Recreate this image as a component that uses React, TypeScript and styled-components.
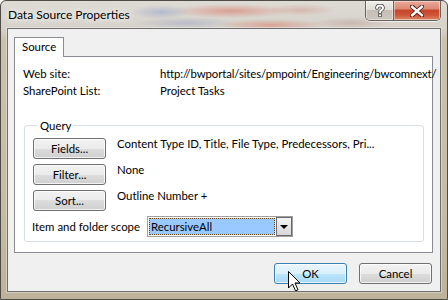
import React from 'react';
import styled, { createGlobalStyle } from 'styled-components';

const Global = createGlobalStyle`
  html, body { margin: 0; padding: 0; background: #ffffff; }
  body { font-family: Lato, "Noto Sans", sans-serif; font-size: 11.4px; color: #000; }
  * { box-sizing: border-box; }
`;

const Window = styled.div`
  position: relative;
  width: 448px;
  height: 300px;
  display: flex;
  flex-direction: column;
  border: 1px solid #4f4c47;
  border-radius: 6px 6px 0 0;
  overflow: hidden;
  background:
    radial-gradient(ellipse 30px 7px at 160px 11px, rgba(110, 130, 200, 0.35), transparent),
    radial-gradient(ellipse 60px 7px at 230px 10px, rgba(215, 90, 70, 0.45), transparent),
    radial-gradient(ellipse 35px 6px at 300px 9px, rgba(200, 110, 90, 0.3), transparent),
    radial-gradient(ellipse 50px 6px at 185px 22px, rgba(120, 135, 190, 0.3), transparent),
    radial-gradient(ellipse 55px 6px at 270px 24px, rgba(215, 95, 70, 0.4), transparent),
    radial-gradient(ellipse 40px 6px at 350px 22px, rgba(170, 120, 110, 0.3), transparent),
    linear-gradient(180deg, #dedbd5 0px, #d6d2ca 27px, #c9c1ab 40px, #c6bda6 200px, #bdb39b 300px);
`;

const TitleBar = styled.div`
  height: 27px;
  display: flex;
  justify-content: space-between;
  align-items: flex-start;
  flex: none;
`;

const Title = styled.div`
  margin: 6px 0 0 7px;
  font-size: 12px;
  line-height: 16px;
  color: #000;
  text-shadow: 0 0 6px #fff, 0 0 10px rgba(255, 255, 255, 0.9);
`;

const CaptionGroup = styled.div`
  display: flex;
  margin-right: 6px;
  border: 1px solid #6b6259;
  border-top: none;
  border-radius: 0 0 5px 5px;
  overflow: hidden;
  box-shadow: 0 1px 0 rgba(255, 255, 255, 0.6);
`;

const CaptionButton = styled.div<{ $close?: boolean }>`
  width: ${p => (p.$close ? 47 : 27)}px;
  height: 19px;
  display: flex;
  align-items: center;
  justify-content: center;
  border-left: ${p => (p.$close ? '1px solid #7a5a50' : 'none')};
  background: ${p =>
    p.$close
      ? 'linear-gradient(180deg, #e9a99a 0%, #dd8a75 40%, #c8452c 50%, #cf5638 75%, #dc8a6a 100%)'
      : 'linear-gradient(180deg, rgba(255,255,255,0.55) 0%, rgba(230,226,220,0.5) 45%, rgba(170,160,150,0.45) 50%, rgba(190,182,172,0.45) 100%)'};
  box-shadow: inset 0 0 0 1px rgba(255, 255, 255, 0.45);
`;

const Client = styled.div`
  flex: 1;
  margin: 0 6px 7px 6px;
  border: 1px solid #6e6e6e;
  background: #f0f0f0;
  display: flex;
  flex-direction: column;
  box-shadow: 0 0 0 1px rgba(255, 255, 255, 0.35);
`;

const TabArea = styled.div`
  padding: 8px 7px 0 6px;
  display: flex;
  flex-direction: column;
`;

const TabStrip = styled.div`
  display: flex;
`;

const Tab = styled.div`
  position: relative;
  z-index: 1;
  height: 20px;
  margin-bottom: -1px;
  padding: 1px 7px 0 7px;
  background: #ffffff;
  border: 1px solid #898c95;
  border-bottom: none;
  line-height: 16px;
`;

const Panel = styled.div`
  height: 197px;
  background: #ffffff;
  border: 1px solid #898c95;
  padding: 8px 8px 0 8px;
  display: flex;
  flex-direction: column;
`;

const InfoGrid = styled.div`
  display: grid;
  grid-template-columns: 137px 1fr;
  line-height: 17px;
  white-space: nowrap;
`;

const Url = styled.div`
  letter-spacing: -0.12px;
`;

const Fieldset = styled.fieldset`
  margin: 19px 0 0 1px;
  padding: 5px 8px 4px 8px;
  border: 1px solid #d5dfe5;
  border-radius: 3px;
  display: flex;
  flex-direction: column;
  gap: 5px;
  box-shadow: inset 0 0 0 1px #ffffff;
`;

const Legend = styled.legend`
  margin-left: 5px;
  padding: 0 2px;
  line-height: 15px;
`;

const QueryRow = styled.div`
  display: flex;
  align-items: flex-start;
  gap: 11px;
`;

const Description = styled.div`
  margin-top: -2px;
  line-height: 16px;
  white-space: nowrap;
`;

const PushButton = styled.div<{ $hot?: boolean }>`
  width: 73px;
  height: 21px;
  flex: none;
  display: flex;
  align-items: center;
  justify-content: center;
  border-radius: 3px;
  border: 1px solid ${p => (p.$hot ? '#3c7fb1' : '#707070')};
  background: ${p =>
    p.$hot
      ? 'linear-gradient(180deg, #eaf6fd 0%, #d9f0fc 50%, #bee6fd 50%, #a7d9f5 100%)'
      : 'linear-gradient(180deg, #f2f2f2 0%, #ebebeb 50%, #dddddd 50%, #cfcfcf 100%)'};
  box-shadow: inset 0 0 0 1px rgba(255, 255, 255, 0.75);
  line-height: 16px;
`;

const ScopeRow = styled.div`
  display: flex;
  align-items: center;
`;

const ScopeLabel = styled.div`
  width: 115px;
  margin-left: -1px;
  line-height: 16px;
  white-space: nowrap;
`;

const Combo = styled.div`
  width: 146px;
  height: 21px;
  display: flex;
  align-items: stretch;
  border: 1px solid #a0a0a0;
  background: #ffffff;
  padding: 1px;
  gap: 1px;
`;

const ComboValue = styled.div`
  flex: 1;
  background: #99c9ff;
  border: 1px dotted #6e4a24;
  line-height: 15px;
  padding-left: 1px;
  color: #000;
`;

const ComboArrow = styled.div`
  width: 16px;
  margin: -1px -1px -1px 0;
  border: 1px solid #6a6a6a;
  background: linear-gradient(180deg, #f4f4f4 0%, #e6e6e6 50%, #d6d6d6 100%);
  display: flex;
  align-items: center;
  justify-content: center;
`;

const Triangle = styled.div`
  width: 0;
  height: 0;
  border-left: 4px solid transparent;
  border-right: 4px solid transparent;
  border-top: 4px solid #000;
`;

const Footer = styled.div`
  flex: 1;
  display: flex;
  justify-content: flex-end;
  align-items: flex-start;
  gap: 12px;
  padding: 10px 8px 0 0;
`;

const Cursor = styled.svg`
  position: absolute;
  left: 287px;
  top: 270px;
  width: 13px;
  height: 21px;
`;

export default function App() {
  return (
    <>
      <Global />
      <Window>
        <TitleBar>
          <Title>Data Source Properties</Title>
          <CaptionGroup>
            <CaptionButton>
              <svg width="10" height="13" viewBox="0 0 10 13">
                <path
                  d="M2 4 Q2 1.5 5 1.5 Q8 1.5 8 4 Q8 5.5 6 6.5 Q5 7 5 8.5"
                  fill="none"
                  stroke="#3a3a3a"
                  strokeWidth="3.6"
                  strokeLinecap="round"
                />
                <path
                  d="M2 4 Q2 1.5 5 1.5 Q8 1.5 8 4 Q8 5.5 6 6.5 Q5 7 5 8.5"
                  fill="none"
                  stroke="#ffffff"
                  strokeWidth="2"
                  strokeLinecap="round"
                />
                <rect x="3.3" y="9.8" width="3.4" height="3" fill="#3a3a3a" />
                <rect x="4" y="10.4" width="2" height="1.8" fill="#ffffff" />
              </svg>
            </CaptionButton>
            <CaptionButton $close>
              <svg width="14" height="12" viewBox="0 0 14 12">
                <path d="M2 1.5 L12 10.5 M12 1.5 L2 10.5" stroke="#5a2418" strokeWidth="4.2" strokeLinecap="square" />
                <path d="M2.2 1.8 L11.8 10.2 M11.8 1.8 L2.2 10.2" stroke="#ffffff" strokeWidth="2.4" strokeLinecap="square" />
              </svg>
            </CaptionButton>
          </CaptionGroup>
        </TitleBar>
        <Client>
          <TabArea>
            <TabStrip>
              <Tab>Source</Tab>
            </TabStrip>
            <Panel>
              <InfoGrid>
                <div>Web site:</div>
                <Url>http://bwportal/sites/pmpoint/Engineering/bwcomnext/</Url>
                <div>SharePoint List:</div>
                <div>Project Tasks</div>
              </InfoGrid>
              <Fieldset>
                <Legend>Query</Legend>
                <QueryRow>
                  <PushButton>Fields...</PushButton>
                  <Description>Content Type ID, Title, File Type, Predecessors, Pri...</Description>
                </QueryRow>
                <QueryRow>
                  <PushButton>Filter...</PushButton>
                  <Description>None</Description>
                </QueryRow>
                <QueryRow>
                  <PushButton>Sort...</PushButton>
                  <Description>Outline Number +</Description>
                </QueryRow>
                <ScopeRow>
                  <ScopeLabel>Item and folder scope</ScopeLabel>
                  <Combo>
                    <ComboValue>RecursiveAll</ComboValue>
                    <ComboArrow>
                      <Triangle />
                    </ComboArrow>
                  </Combo>
                </ScopeRow>
              </Fieldset>
            </Panel>
          </TabArea>
          <Footer>
            <PushButton $hot>OK</PushButton>
            <PushButton>Cancel</PushButton>
          </Footer>
        </Client>
        <Cursor viewBox="0 0 13 21">
          <path
            d="M0.5 0.5 L0.5 17 L4.5 13 L7.5 19.8 L10 18.8 L7 12 L12 12 Z"
            fill="#ffffff"
            stroke="#000000"
            strokeWidth="1"
            strokeLinejoin="miter"
          />
        </Cursor>
      </Window>
    </>
  );
}
